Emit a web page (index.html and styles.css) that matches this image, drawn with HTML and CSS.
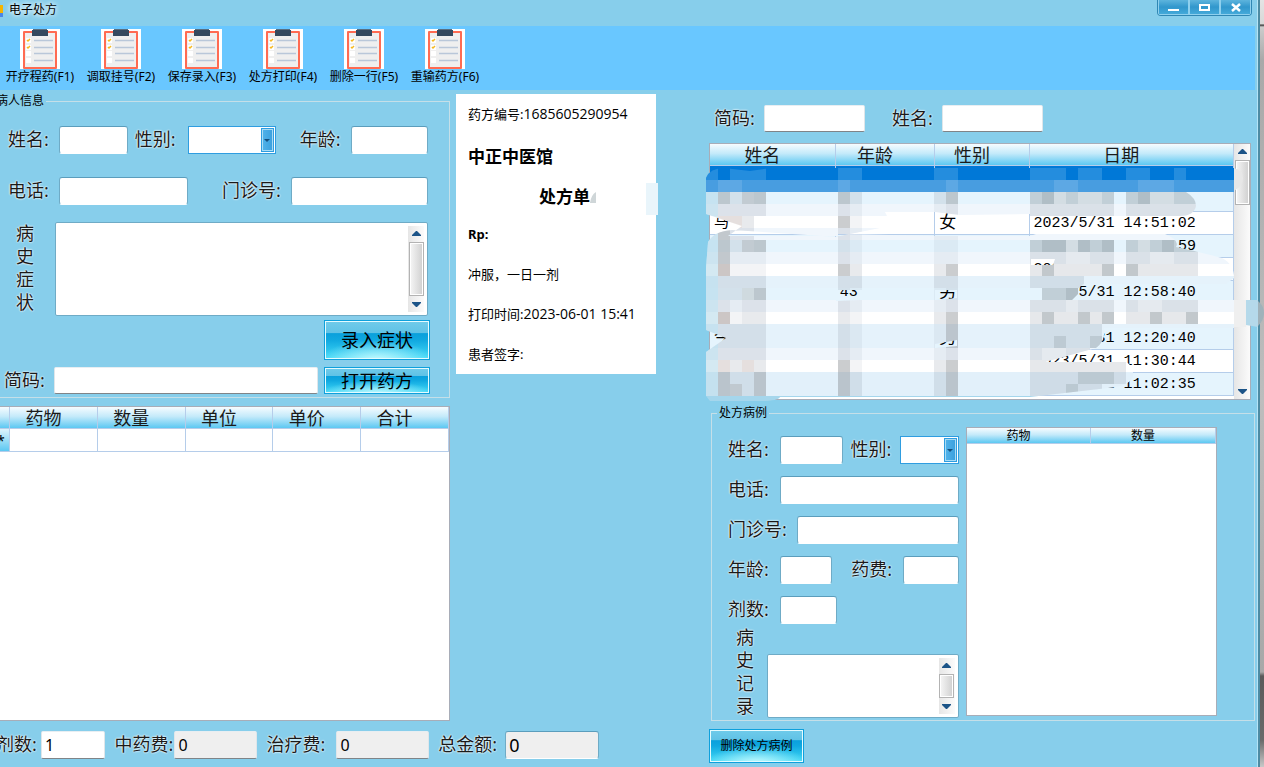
FILE: index.html
```html
<!DOCTYPE html>
<html lang="zh-CN">
<head>
<meta charset="utf-8">
<title>电子处方</title>
<link rel="stylesheet" href="styles.css">
</head>
<body>
<svg class="defs" width="0" height="0" aria-hidden="true">
  <symbol id="clipboard" viewBox="0 0 40 40">
    <rect width="40" height="40" fill="#fff"/>
    <rect x="3" y="2" width="34" height="38" rx="1" fill="#ff6b52"/>
    <rect x="5" y="4" width="30" height="34" fill="#efefef"/>
    <path d="M12 1h16v6H12z" fill="#34495e"/>
    <path d="M13 0h14v1H13z" fill="#5b6f80"/>
    <path d="M6 9h5v5H6zM6 16h5v5H6zM6 22h5v5H6zM6 29h5v5H6z" fill="#fff"/>
    <path d="M7 11l1 1 2-2M7 18l1 1 2-2" fill="none" stroke="#f5b921" stroke-width="1.500"/>
    <path d="M14 11.500h19M14 18.500h19M14 24.500h19M14 31.500h19" stroke="#b9c7d9" stroke-width="1.300"/>
  </symbol>
  <symbol id="up" viewBox="0 0 9 5"><path d="M0 5V4l4-4h1l4 4v1z" fill="#1c5488"/></symbol>
  <symbol id="down" viewBox="0 0 9 5"><path d="M0 0v1l4 4h1l4-4V0z" fill="#1c5488"/></symbol>
</svg>

<div class="screen">
<div class="window">
  <header class="titlebar">
    <span class="app-icon"></span>
    <h1 class="title">电子处方</h1>
    <div class="win-buttons">
      <button type="button" aria-label="最小化"><svg width="12" height="10"><path d="M0 6h11v2H0z" fill="#fff"/></svg></button>
      <button type="button" aria-label="最大化"><svg width="12" height="10"><path d="M1 2h9v5H1z" fill="none" stroke="#fff" stroke-width="2"/></svg></button>
      <button type="button" aria-label="关闭"><svg width="12" height="10"><path d="M2 1l8 7M10 1L2 8" stroke="#fff" stroke-width="2.500"/></svg></button>
    </div>
  </header>

  <nav class="toolbar">
    <button type="button"><svg width="40" height="40"><use href="#clipboard"/></svg><span>开疗程药(F1)</span></button>
    <button type="button"><svg width="40" height="40"><use href="#clipboard"/></svg><span>调取挂号(F2)</span></button>
    <button type="button"><svg width="40" height="40"><use href="#clipboard"/></svg><span>保存录入(F3)</span></button>
    <button type="button"><svg width="40" height="40"><use href="#clipboard"/></svg><span>处方打印(F4)</span></button>
    <button type="button"><svg width="40" height="40"><use href="#clipboard"/></svg><span>删除一行(F5)</span></button>
    <button type="button"><svg width="40" height="40"><use href="#clipboard"/></svg><span>重输药方(F6)</span></button>
  </nav>

  <main class="content">
    <div class="left-area">
      <div class="left-top">
        <div class="left-column">
          <fieldset class="group patient">
            <legend>病人信息</legend>
            <div class="row">
              <label class="lb" for="p-name">姓名:</label>
              <input class="field w-name" id="p-name">
              <label class="lb lb-sex" for="p-sex">性别:</label>
              <div class="combo w-sex"><select id="p-sex"><option></option><option>男</option><option>女</option></select><span class="combo-arrow"></span></div>
              <label class="lb lb-age" for="p-age">年龄:</label>
              <input class="field w-age" id="p-age">
            </div>
            <div class="row row-second">
              <label class="lb" for="p-tel">电话:</label>
              <input class="field w-tel" id="p-tel">
              <label class="lb lb-no" for="p-no">门诊号:</label>
              <input class="field w-no" id="p-no">
            </div>
            <div class="row row-notes">
              <label class="vertical" for="p-history">病史症状</label>
              <div class="memo">
                <textarea id="p-history"></textarea>
                <div class="scroll"><svg width="9" height="5"><use href="#up"/></svg><span class="thumb"></span><svg width="9" height="5"><use href="#down"/></svg></div>
              </div>
            </div>
            <div class="row row-enter"><button type="button" class="glossy tall">录入症状</button></div>
            <div class="row row-code">
              <label class="lb lb-code" for="p-code">简码:</label>
              <input class="field sunken w-code" id="p-code">
              <button type="button" class="glossy">打开药方</button>
            </div>
          </fieldset>

          <div class="sheet drugs">
            <table class="grid">
              <colgroup><col class="c-mark"><col><col><col><col><col></colgroup>
              <thead><tr><th></th><th>药物</th><th>数量</th><th>单位</th><th>单价</th><th>合计</th></tr></thead>
              <tbody><tr><td class="marker">*</td><td></td><td></td><td></td><td></td><td></td></tr></tbody>
            </table>
          </div>
        </div>

        <article class="slip">
          <p>药方编号:<span class="num">1685605290954</span></p>
          <h2 class="clinic">中正中医馆</h2>
          <h3 class="slip-title">处方单<svg width="6" height="11" aria-hidden="true"><path d="M6 0v11H0Q1 3 6 0z" fill="#cfd6d8"/></svg></h3>
          <p><b>Rp:</b></p>
          <p>冲服，一日一剂</p>
          <p>打印时间:<span class="num">2023-06-01 15:41</span></p>
          <p>患者签字:</p>
          <span class="smudge"></span>
        </article>
      </div>

      <footer class="totals">
        <label class="lb t-first" for="t-count">剂数:</label>
        <input class="field sunken t-a" id="t-count" value="1">
        <label class="lb t-l2" for="t-drug">中药费:</label>
        <input class="field sunken gray t-b" id="t-drug" value="0" readonly>
        <label class="lb t-l3" for="t-cure">治疗费:</label>
        <input class="field sunken gray t-c" id="t-cure" value="0" readonly>
        <label class="lb t-l4" for="t-sum">总金额:</label>
        <input class="field gray t-d" id="t-sum" value="0" readonly>
      </footer>
    </div>

    <div class="right-area">
      <div class="row search">
        <label class="lb s-l1" for="s-code">简码:</label>
        <input class="field sunken w-search" id="s-code">
        <label class="lb s-l2" for="s-name">姓名:</label>
        <input class="field sunken w-search" id="s-name">
        <span class="s-rest"></span>
      </div>

      <div class="history">
        <div class="sheet history-sheet">
          <table class="grid striped">
            <colgroup><col class="h-name"><col class="h-age"><col class="h-sex"><col class="h-date"></colgroup>
            <thead><tr><th>姓名</th><th>年龄</th><th>性别</th><th>日期</th></tr></thead>
            <tbody>
              <tr class="selected"><td></td><td></td><td></td><td></td></tr>
              <tr><td></td><td></td><td></td><td></td></tr>
              <tr><td>马</td><td></td><td>女</td><td>2023/5/31 14:51:02</td></tr>
              <tr><td></td><td></td><td></td><td class="tail">59</td></tr>
              <tr><td></td><td></td><td></td><td>2023</td></tr>
              <tr><td></td><td>43</td><td>男</td><td>2023/5/31 12:58:40</td></tr>
              <tr><td></td><td></td><td></td><td></td></tr>
              <tr><td>今</td><td></td><td>男</td><td>2023/5/31 12:20:40</td></tr>
              <tr><td></td><td></td><td></td><td>2023/5/31 11:30:44</td></tr>
              <tr><td></td><td></td><td></td><td>2023/5/31 11:02:35</td></tr>
            </tbody>
          </table>
          <div class="scroll big"><svg width="9" height="5"><use href="#up"/></svg><span class="thumb"></span><svg width="9" height="5"><use href="#down"/></svg></div>
        </div>
        <svg class="mosaic" viewBox="706 165 558 240" aria-hidden="true">
          <clipPath id="smear">
            <path clip-rule="evenodd" d="M706 178Q710 168 724 168L750 171 770 168H1234V192H1186Q1196 198 1196 206 1194 216 1180 216H1030V214L960 215 935 212H885L887 216 880 228 840 236H728L742 226 718 218 706 214z
            M708 242Q714 231 732 230L838 237V234L940 236H1030L1036 234H1165Q1180 240 1176 247 1200 252 1222 258 1234 264 1234 278L1226 284H1084Q1078 286 1078 294L1072 300H1234V328H1104Q1106 340 1096 348L1045 362H1126Q1134 366 1133 376 1130 386 1108 388L1030 397H780Q778 401 760 401H710L706 396V352L726 338 706 330V268z
            M836 290V301L862 300V290zM935 290V300L957 298V290zM935 344V348L957 346V340zM1031 259V265H1053L1055 259z"/>
          </clipPath>
          <g clip-path="url(#smear)" fill="none" stroke-width="12">
            <path d="M706 174H1240" stroke="#0078d7"/>
            <path d="M706 186H1240" stroke="#489de0"/>
            <path d="M706 198H1240M706 246H1240M706 294H1240" stroke="#e5f4fd"/>
            <path d="M706 210H1240M706 234H1240M706 258H1240M706 306H1240M706 354H1240" stroke="#f0f6fc"/>
            <path d="M706 222H1240M706 270H1240M706 318H1240M706 366H1240" stroke="#fff"/>
            <path d="M706 282H1240M706 330H1240M706 342H1240" stroke="#e5f2fb"/>
            <path d="M706 378H1240M706 390H1240" stroke="#e2f0fa"/>
            <path d="M706 402H1240" stroke="#a5d6ec"/>
            <path d="M712 192V396" stroke="#9fcfe2" stroke-opacity=".45"/>
            <path d="M724 192V204M724 222V276M724 312V324M724 372V396M760 192V204M760 240V252M760 288V300M760 372V396M844 192V204M844 216V228M844 264V276M844 360V396M952 192V204M952 264V276M952 312V348M952 360V396" stroke="#83898c" stroke-opacity=".42"/>
            <path d="M724 204V222M724 276V312M724 324V372M736 192V252M736 276V300M736 324V396M748 192V252M748 276V288M748 300V396M760 204V216M760 276V288M760 300V372M844 204V216M844 228V264M844 276V360M856 192V204M856 264V288M856 372V396M940 192V204M940 264V288M940 312V324M940 360V396M952 204V216M952 276V312M952 348V360" stroke="#8b98a5" stroke-opacity=".2"/>
            <path d="M856 204V264M856 288V372M940 204V264M940 288V312M940 324V360M952 216V264M736 252V276M736 300V324M748 252V276M760 252V276" stroke="#8b98a5" stroke-opacity=".1"/>
            <path d="M742 198H754M742 246H754M742 294H754M730 390H742" stroke="#8e8b86" stroke-opacity=".25"/>
            <path d="M718 222H742M718 270H730M718 318H730M718 366H730M742 366H754" stroke="#d6a090" stroke-opacity=".15"/>
            <path d="M706 174H718M730 174H766M838 174H862M934 174H958M1030 174H1066M1078 174H1102M1126 174H1150M1174 174H1186" stroke="#5aace8" stroke-opacity=".4"/>
            <path d="M718 186H742M838 186H850M946 186H958M1054 186H1078M1138 186H1174" stroke="#8fc4ef" stroke-opacity=".3"/>
            <path d="M1030 198H1114M1126 198H1198M1030 246H1114M1126 246H1198M1042 270H1054M1102 270H1114M1126 270H1138M1042 294H1078M1042 318H1054M1078 318H1090M1102 318H1114M1150 318H1162M1186 318H1198" stroke="#8d989d" stroke-opacity=".4"/>
            <path d="M1030 210H1114M1126 210H1198M1030 258H1114M1126 258H1198M1030 270H1114M1126 270H1198M1030 282H1084M1030 306H1114M1126 306H1198M1030 318H1114M1126 318H1198M1030 330H1102M1030 342H1102M1030 354H1090M1030 366H1126M1030 378H1126M1030 390H1102" stroke="#8b98a5" stroke-opacity=".22"/>
            <path d="M1042 198H1054M1078 246H1090M1042 246H1066M1102 246H1114M1138 198H1150M1162 246H1174M1066 294H1078M1054 342H1066M1090 342H1102M1066 390H1078M1078 378H1114" stroke="#6f7d83" stroke-opacity=".2"/>
            <path d="M1054 198H1066M1078 198H1102M1150 198H1174M1066 246H1078M1138 246H1150M1066 258H1090M1150 258H1174M1066 306H1078M1138 306H1162M1042 354H1066" stroke="#fff" stroke-opacity=".3"/>
          </g>
          <path d="M1234 168Q1243 170 1243 178T1234 191z" fill="#e7e7e7"/>
          <path d="M1234 300h12v27h-12z" fill="#efefef"/>
          <path d="M1246 300h12v27l-12-2z" fill="#b5d9ea"/>
          <path d="M1258 301Q1264 306 1264 313T1258 326z" fill="#9fb2ba"/>
        </svg>
      </div>

      <fieldset class="group case">
        <legend>处方病例</legend>
        <div class="case-form">
          <div class="case-rows">
            <div class="row">
              <label class="lb" for="c-name">姓名:</label><input class="field k-name" id="c-name">
              <label class="lb lb-csex" for="c-sex">性别:</label>
              <div class="combo k-sex"><select id="c-sex"><option></option><option>男</option><option>女</option></select><span class="combo-arrow"></span></div>
            </div>
            <div class="row"><label class="lb" for="c-tel">电话:</label><input class="field k-full" id="c-tel"></div>
            <div class="row"><label class="lb lb-cno" for="c-no">门诊号:</label><input class="field k-full" id="c-no"></div>
            <div class="row">
              <label class="lb" for="c-age">年龄:</label><input class="field k-age" id="c-age">
              <label class="lb lb-fee" for="c-fee">药费:</label><input class="field k-fee" id="c-fee">
            </div>
            <div class="row"><label class="lb" for="c-count">剂数:</label><input class="field k-count" id="c-count"><span class="k-rest"></span></div>
          </div>
          <div class="row case-notes">
            <label class="vertical" for="c-history">病史记录</label>
            <div class="memo">
              <textarea id="c-history"></textarea>
              <div class="scroll"><svg width="9" height="5"><use href="#up"/></svg><span class="thumb"></span><svg width="9" height="5"><use href="#down"/></svg></div>
            </div>
          </div>
        </div>
        <div class="sheet case-sheet">
          <table class="grid small">
            <thead><tr><th>药物</th><th>数量</th></tr></thead>
          </table>
        </div>
      </fieldset>

      <button type="button" class="glossy delete">删除处方病例</button>
    </div>
  </main>
</div>
<div class="desktop"></div>
</div>
</body>
</html>
```
FILE: styles.css
```css
* { box-sizing: border-box; }

body {
  margin: 0;
  background: #87ceeb;
  color: #000;
  font: 12px/16px "Noto Sans", "Noto Sans CJK SC", sans-serif;
}

input, select, textarea, button {
  margin: 0;
  padding: 0;
  font: inherit;
  color: inherit;
}

h1, h2, h3, p { margin: 0; }

.defs { position: absolute; }

.screen {
  display: flex;
  min-height: 100vh;
  overflow: hidden;
}

.window {
  flex: 1;
  min-width: 0;
  display: flex;
  flex-direction: column;
  background: #87ceeb;
  border-right: 1px solid #b4e3f5;
}

.desktop {
  flex: none;
  width: 6px;
  border-left: 2px solid #4d8ba3;
  background: linear-gradient(#e4e4e4 0, #d8d8d8 24px, #333 25px, #ccc 27px, #a9a9a9 60px, #bdbdbd 400px, #a8a8a8 672px, #5a5a5a 676px, #6a6a6a 740px, #c8c8c8 767px);
}

/* Title bar */
.titlebar {
  display: flex;
  align-items: flex-start;
  height: 26px;
}

.app-icon {
  width: 3px;
  height: 12px;
  margin-top: 5px;
  background: linear-gradient(#f5b400 0 8px, #4a86e8 8px);
}

.title {
  flex: 1;
  margin: 2px 0 0 6px;
  font-size: 12px;
  font-weight: 400;
  text-shadow: 0 0 4px #fff, 0 0 6px #fff;
}

.win-buttons {
  display: flex;
  margin-right: 5px;
  border: 1px solid #2f87b4;
  border-top: 0;
  border-radius: 0 0 4px 4px;
  overflow: hidden;
}

.win-buttons button {
  width: 31px;
  height: 15px;
  border: 1px solid #8fd0ee;
  border-top: 0;
  background: linear-gradient(#5db4dd, #3197cc 50%, #44a9d9);
}

.win-buttons svg { display: block; margin: 2px auto 0; }

/* Toolbar */
.toolbar {
  display: flex;
  height: 64px;
  margin-right: 2px;
  padding: 3px 0 0 4px;
  gap: 9px;
  background: #69c7ff;
}

.toolbar button {
  display: flex;
  flex-direction: column;
  align-items: center;
  width: 72px;
  border: 0;
  background: none;
  white-space: nowrap;
}

/* Shared controls */
.lb {
  flex: none;
  width: 52px;
  color: #1a1a1a;
  font-size: 18px;
  line-height: 24px;
  padding-bottom: 2px;
  white-space: nowrap;
  text-shadow: 0 0 2px #fff, 0 0 2px #fff;
}

.field {
  min-width: 0;
  width: 0;
  height: 28px;
  border: 1px solid #6fabc6;
  border-top-color: #5b9dbc;
  border-bottom-color: #fff;
  border-radius: 3px;
  background: #fff;
  font-size: 18px;
  text-indent: 3px;
}

.sunken {
  border-color: #e8eef2 #dfe6ea #808488;
  border-radius: 2px;
  font-size: 16px;
}

.gray { background: #efefef; }

.combo {
  display: flex;
  min-width: 0;
  height: 28px;
  padding: 1px;
  border: 1px solid #2f9de0;
  background: #fff;
}

.combo select {
  flex: 1;
  min-width: 0;
  border: 0;
  appearance: none;
  background: #fff;
  font-size: 18px;
}

.combo-arrow {
  display: flex;
  align-items: center;
  justify-content: center;
  width: 13px;
  border: 1px solid #2f9de0;
  box-shadow: inset 0 0 0 1px #a9dcf5;
  background: linear-gradient(90deg, #51b3ea, #3a9fdd);
}

.combo-arrow::after {
  content: "";
  border: 3px solid transparent;
  border-top-color: #15507e;
  border-bottom: 0;
}

.row {
  display: flex;
  align-items: center;
}

.vertical {
  flex: none;
  width: 20px;
  color: #1a1a1a;
  font-size: 18px;
  line-height: 23px;
  word-break: break-all;
  text-shadow: 0 0 2px #fff, 0 0 2px #fff;
}

.memo {
  flex: 1;
  display: flex;
  min-width: 0;
  padding: 3px;
  border: 1px solid #6fabc6;
  border-radius: 2px;
  background: #fff;
}

.memo textarea {
  flex: 1;
  min-width: 0;
  height: 100%;
  border: 0;
  resize: none;
  overflow: hidden;
  font-size: 18px;
}

.scroll {
  flex: none;
  display: flex;
  flex-direction: column;
  align-items: center;
  width: 16px;
  padding: 5px 0;
  background: linear-gradient(90deg, #e6e6e6, #fbfbfb);
}

.scroll svg { display: block; flex: none; }

.thumb {
  flex: 1;
  width: 15px;
  margin: 6px 0;
  border: 1px solid #b3b3b3;
  box-shadow: inset 0 0 0 1px #fff;
  background: linear-gradient(90deg, #f6f6f6, #cfcfcf);
}

.group {
  min-width: 0;
  margin: 0;
  padding: 0;
  border: 1px solid #c5dfe8;
}

.group legend { padding: 0 2px; }

.glossy {
  flex: none;
  width: 106px;
  height: 27px;
  border: 1px solid #0ea0dc;
  box-shadow: inset 0 0 0 1px #e4fbff;
  background:
    radial-gradient(ellipse 55% 55% at 50% 105%, #c8fbff, transparent),
    linear-gradient(#70cbea, #5fc2e6 32%, #0aa0dc 33%, #10a8e0 50%, #45dcf8);
  font-size: 18px;
  line-height: 20px;
}

.tall { height: 40px; }

/* Sheets */
.sheet {
  border: 1px solid #a8adb8;
  background: #fff;
  overflow: hidden;
}

.grid {
  width: 100%;
  border-collapse: separate;
  border-spacing: 0;
  table-layout: fixed;
  font-size: 18px;
  line-height: 21px;
}

.grid th {
  height: 22px;
  padding: 0 20px 0 0;
  border-right: 1px solid #b5cdea;
  border-bottom: 1px solid #b5cdea;
  background: linear-gradient(#f6fcff, #c4eafa 45%, #5cc8f2);
  color: #1a1a1a;
  font-weight: 400;
  line-height: 20px;
}

.grid td {
  height: 23px;
  padding: 0 0 0 4px;
  border-right: 1px solid #b5cdea;
  border-bottom: 1px solid #b5cdea;
}

.grid.small { font-size: 12px; }

.grid.small th {
  height: 16px;
  line-height: 14px;
  color: #000;
}

.striped td {
  padding-top: 2px;
  font-family: "Liberation Mono", "Noto Sans CJK SC", monospace;
  font-size: 15px;
  line-height: 20px;
  white-space: nowrap;
}

.striped td:nth-child(3) { font-size: 17px; }
.striped tr:nth-child(even) td { background: #e5f4fd; }
.striped .selected td { background: #0078d7; }
.striped .tail { padding-right: 37px; text-align: right; }

/* Layout */
.content { display: flex; }

.left-area {
  flex: 656 1 0;
  min-width: 0;
}

.left-top { display: flex; align-items: flex-start; }

.left-column {
  flex: 450 1 0;
  min-width: 0;
  padding-top: 3px;
}

.patient {
  padding: 17px 21px 3px 8px;
  border-left: 0;
}

.patient legend { margin-left: -12px; padding-left: 0; }
.patient .lb { width: 51px; }
.patient .lb-sex { width: 60px; padding-left: 7px; }
.patient .lb-age { width: 75px; padding-left: 24px; }
.patient .lb-no { width: 103px; padding-left: 34px; }
.w-name { flex: 69 1 0; }
.w-sex { flex: 87 1 0; }
.w-age { flex: 78 1 0; }
.w-tel { flex: 129 1 0; }
.w-no { flex: 137 1 0; }
.row-second { margin-top: 23px; }

.row-notes {
  align-items: stretch;
  margin-top: 17px;
  padding-left: 8px;
}

.row-notes .vertical { width: 39px; padding-right: 19px; }
.row-notes .memo { min-height: 94px; }
.row-enter { justify-content: flex-end; margin: 4px -2px 0 0; }
.row-code { gap: 6px; margin: 7px -2px 0 -4px; }
.patient .lb-code { width: 44px; }
.w-code { flex: 1; height: 27px; }

.drugs { height: 315px; margin-top: 8px; border-left: 0; }
.c-mark { width: 10px; }

.grid .marker {
  padding: 0;
  background: linear-gradient(#dff4fc, #5cc8f2);
  font-size: 14px;
  text-indent: -3px;
}

.slip {
  position: relative;
  flex: 176 1 0;
  margin: 4px 0 0 6px;
  padding: 0 12px;
  background: #fff;
  font-size: 13px;
  white-space: nowrap;
}

.slip p { line-height: 40px; }
.num { font-family: "Open Sans", sans-serif; font-size: 14px; }
.clinic { font-size: 17px; line-height: 46px; }
.slip-title { padding-left: 71px; font-size: 17px; line-height: 34px; }

.smudge {
  position: absolute;
  top: 89px;
  right: -2px;
  width: 12px;
  height: 32px;
  background: #e9f5fb;
}

.totals {
  display: flex;
  align-items: center;
  margin: 10px 57px 0 -4px;
}

.totals .t-first { width: 45px; }
.totals .t-l2 { width: 69px; padding-left: 9px; }
.totals .t-l3 { width: 79px; padding-left: 9px; }
.totals .t-l4 { width: 76px; padding-left: 9px; }
.t-a { flex: 64 1 0; }
.t-b { flex: 83 1 0; }
.t-c { flex: 93 1 0; }
.t-d { flex: 94 1 0; }

.right-area {
  flex: 546 1 0;
  min-width: 0;
  margin: 0 2px 0 53px;
}

.search { padding: 15px 0 0 5px; }
.search .s-l1 { width: 50px; }
.search .s-l2 { width: 77px; padding-left: 27px; }
.w-search { flex: 100 1 0; height: 27px; }
.s-rest { flex: 214 1 0; }

.history {
  position: relative;
  margin: 11px 4px 0 0;
}

.history-sheet { display: flex; height: 257px; }
.history-sheet .grid { flex: 1; align-self: flex-start; min-width: 0; }
.h-name { width: 24%; }
.h-age { width: 19%; }
.h-sex { width: 18%; }
.h-date { width: 39%; }
.big .thumb { flex: 0 0 45px; margin-bottom: auto; }

.mosaic {
  position: absolute;
  top: 22px;
  left: -3px;
  width: 558px;
  height: 240px;
}

.case {
  display: flex;
  gap: 7px;
  margin: 5px 0 0 2px;
  padding: 6px 37px 2px 16px;
}

.case legend { margin-left: -11px; }
.case-form { flex: 231 1 0; min-width: 0; padding-top: 9px; }

.case-rows {
  display: flex;
  flex-direction: column;
  gap: 12px;
}

.case .lb-csex { width: 57px; padding-left: 8px; }
.case .lb-cno { width: 69px; }
.case .lb-fee { width: 71px; padding-left: 19px; }
.k-name { flex: 64 1 0; }
.k-sex { flex: 58 1 0; }
.k-full { flex: 1; }
.k-age { flex: 52 1 0; }
.k-fee, .k-count { flex: 55 1 0; }
.k-rest { flex: 123 1 0; }

.case-notes {
  align-items: flex-end;
  margin-top: 2px;
  padding-left: 8px;
}

.case-notes .vertical { width: 31px; padding-right: 11px; }
.case-notes .memo { height: 64px; }
.case-sheet { flex: 250 1 0; margin-bottom: 2px; }

.delete {
  display: block;
  width: 95px;
  height: 34px;
  margin-top: 8px;
  font-size: 12px;
}
```
